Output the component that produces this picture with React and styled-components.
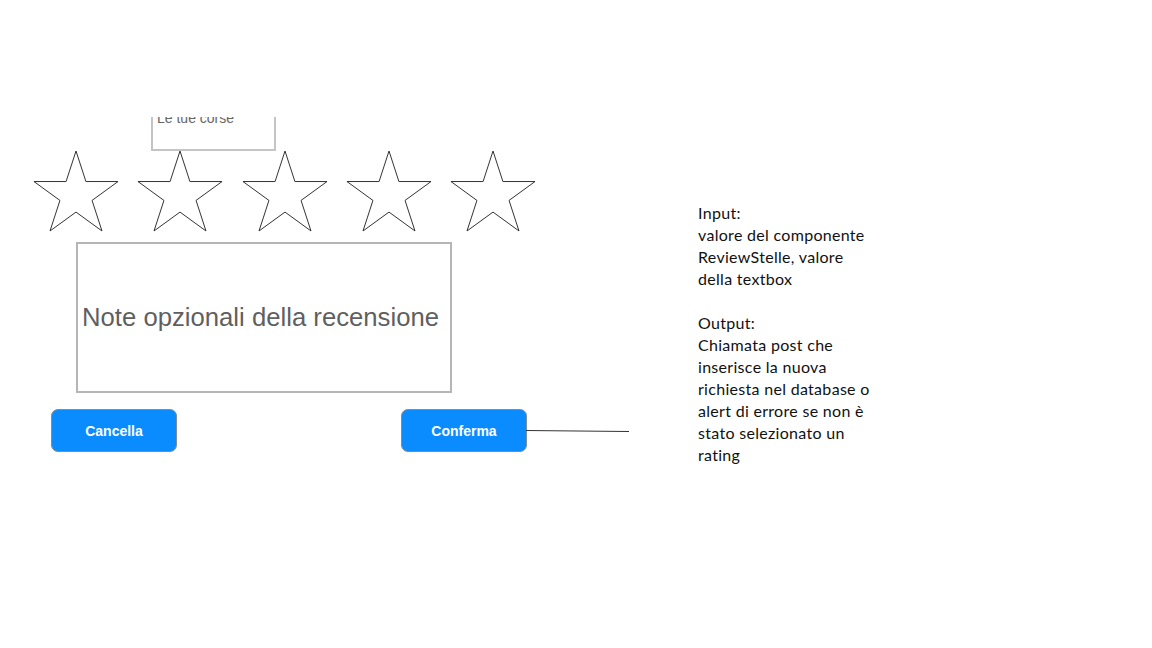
import React from 'react'
import styled, { createGlobalStyle } from 'styled-components'

const GlobalStyle = createGlobalStyle`
  html, body {
    margin: 0;
    padding: 0;
    background: #ffffff;
  }
  #root {
    width: 1152px;
    height: 648px;
  }
`

/****************** CANVAS ******************/

const Canvas = styled.div`
  display: flex;
  align-items: flex-start;
  width: 1152px;
  height: 648px;
  box-sizing: border-box;
  padding: 117px 0 0 34px;
  overflow: hidden;
  background: #ffffff;
  font-family: "Liberation Sans", Arial, sans-serif;
`

const Form = styled.div`
  display: flex;
  flex-direction: column;
  align-items: flex-start;
  width: 595px;
`

const ClippedBox = styled.div`
  margin-left: 117px;
  width: 121px;
  height: 32px;
  overflow: hidden;
  border: 2px solid #c4c4c4;
  border-top: none;
`

const ClippedLabel = styled.div`
  margin: -7px 0 0 4px;
  font-size: 14px;
  line-height: 16px;
  color: #666666;
  white-space: nowrap;
`

const StarRow = styled.div`
  display: flex;
  gap: 20.25px;
  height: 91px;
`

const StarSvg = styled.svg`
  display: block;
  overflow: visible;
`

const NoteBox = styled.div`
  margin-left: 42px;
  width: 371px;
  height: 147px;
  box-sizing: content-box;
  border: 2px solid #b5b5b5;
  display: flex;
  align-items: center;
  justify-content: center;
  padding-right: 1px;
`

const NoteText = styled.span`
  margin-right: 6px;
  font-size: 25.7px;
  color: #5f5f5f;
  white-space: nowrap;
`

const ButtonRow = styled.div`
  display: flex;
  align-items: center;
  margin: 16px 0 0 17px;
`

const ButtonSpacer = styled.div`
  width: 224px;
`

const ActionButton = styled.button`
  width: 126px;
  height: 43px;
  box-sizing: border-box;
  border: 1px solid #7f8c99;
  border-radius: 7px;
  background: #0a8cff;
  color: #ffffff;
  font-family: "Liberation Sans", Arial, sans-serif;
  font-weight: bold;
  font-size: 14px;
  padding: 0;
  cursor: pointer;
`

const Connector = styled.div`
  width: 103px;
  height: 1px;
  margin-left: -1px;
  background: #333333;
  transform-origin: left center;
  transform: rotate(0.55deg);
`

const Notes = styled.div`
  margin: 85px 0 0 69px;
  font-family: Lato, "Open Sans", sans-serif;
  font-size: 16px;
  letter-spacing: 0.3px;
  line-height: 22px;
  color: #111111;
  white-space: nowrap;
`

/****************** STAR ******************/

const starPoints = (() => {
  const R = 44.2
  const r = R * 0.382
  const cx = 42
  const cy = 44.2
  const pts = []
  for (let i = 0; i < 10; i++) {
    const rad = i % 2 === 0 ? R : r
    const a = (-90 + i * 36) * Math.PI / 180
    pts.push(`${(cx + rad * Math.cos(a)).toFixed(2)},${(cy + rad * Math.sin(a)).toFixed(2)}`)
  }
  return pts.join(' ')
})()

const Star = () => (
  <StarSvg width="84" height="81" viewBox="0 0 84 81">
    <polygon points={starPoints} fill="#ffffff" stroke="#333333" strokeWidth="1" />
  </StarSvg>
)

function App() {
  return (
    <>
      <GlobalStyle />
      <Canvas>
        <Form>
          <ClippedBox>
            <ClippedLabel>Le tue corse</ClippedLabel>
          </ClippedBox>

          <StarRow>
            {[1, 2, 3, 4, 5].map(n => <Star key={n} />)}
          </StarRow>

          <NoteBox>
            <NoteText>Note opzionali della recensione</NoteText>
          </NoteBox>

          <ButtonRow>
            <ActionButton>Cancella</ActionButton>
            <ButtonSpacer />
            <ActionButton>Conferma</ActionButton>
            <Connector />
          </ButtonRow>
        </Form>

        <Notes>
          Input:<br />
          valore del componente<br />
          ReviewStelle, valore<br />
          della textbox<br />
          <br />
          Output:<br />
          Chiamata post che<br />
          inserisce la nuova<br />
          richiesta nel database o<br />
          alert di errore se non è<br />
          stato selezionato un<br />
          rating
        </Notes>
      </Canvas>
    </>
  )
}

export default App
